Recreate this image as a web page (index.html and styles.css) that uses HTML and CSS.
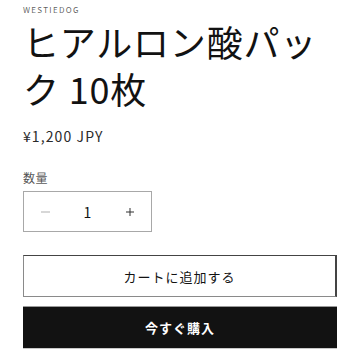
FILE: index.html
```html
<!DOCTYPE html>
<html lang="ja">
<head>
<meta charset="utf-8">
<link rel="stylesheet" href="styles.css">
</head>
<body>
<main class="product">
  <p class="vendor">WESTIEDOG</p>
  <h1 class="title">ヒアルロン酸パック 10枚</h1>
  <p class="price">¥1,200 JPY</p>
  <p class="qty-label">数量</p>
  <div class="qty">
    <button class="qty-btn" type="button" aria-label="減らす">
      <svg width="9" height="2" viewBox="0 0 9 2"><rect x="0" y="0.5" width="9" height="1" fill="#b0b0b0"/></svg>
    </button>
    <span class="qty-value">1</span>
    <button class="qty-btn" type="button" aria-label="増やす">
      <svg width="8" height="8" viewBox="0 0 8 8"><rect x="0" y="3.5" width="8" height="1" fill="#333"/><rect x="3.5" y="0" width="1" height="8" fill="#333"/></svg>
    </button>
  </div>
  <div class="actions">
    <button class="btn btn-secondary" type="button">カートに追加する</button>
    <button class="btn btn-primary" type="button">今すぐ購入</button>
  </div>
</main>
</body>
</html>
```

FILE: styles.css
```css
* { box-sizing: border-box; }
html, body { margin: 0; padding: 0; background: #fff; }
body {
  font-family: "Noto Sans CJK JP", "Noto Sans", sans-serif;
  color: rgba(18, 18, 18, 0.75);
}
.product {
  padding: 4px 18px 0 23px;
}
.vendor {
  margin: 0;
  font-size: 8px;
  line-height: 12px;
  letter-spacing: 1.3px;
  color: rgba(18, 18, 18, 0.7);
}
.title {
  margin: 2px 0 0;
  font-size: 36px;
  font-weight: 400;
  line-height: 47px;
  letter-spacing: 0.8px;
  color: #121212;
}
.price {
  margin: 14px 0 0;
  font-size: 14px;
  line-height: 21px;
  letter-spacing: 1.1px;
  color: #2a2a2a;
}
.qty-label {
  margin: 22px 0 0;
  font-size: 12px;
  line-height: 18px;
  letter-spacing: 0.5px;
}
.qty {
  margin-top: 4px;
  width: 129px;
  height: 41px;
  border: 1px solid #a8a8a8;
  display: grid;
  grid-template-columns: 42px 1fr 42px;
  align-items: center;
}
.qty-btn {
  border: 0;
  background: none;
  padding: 0;
  height: 100%;
  display: flex;
  align-items: center;
  justify-content: center;
}
.qty-value {
  text-align: center;
  font-size: 14px;
  color: #121212;
}
.actions {
  margin-top: 23px;
  width: 314px;
  display: flex;
  flex-direction: column;
  gap: 9px;
}
.btn {
  font-family: inherit;
  font-size: 13px;
  letter-spacing: 1px;
  width: 100%;
  display: flex;
  align-items: center;
  justify-content: center;
  padding: 0;
}
.btn-secondary {
  height: 42px;
  background: #fff;
  color: #121212;
  border: 1px solid #444;
  border-right-width: 2px;
  border-bottom-color: #8a8a8a;
  border-left-color: #8a8a8a;
}
.btn-primary {
  height: 43px;
  background: #121212;
  color: #fff;
  font-weight: 700;
  border: 0;
  border-top: 1px solid #9a9a9a;
  border-bottom: 1px solid #c8c8c8;
}
```
